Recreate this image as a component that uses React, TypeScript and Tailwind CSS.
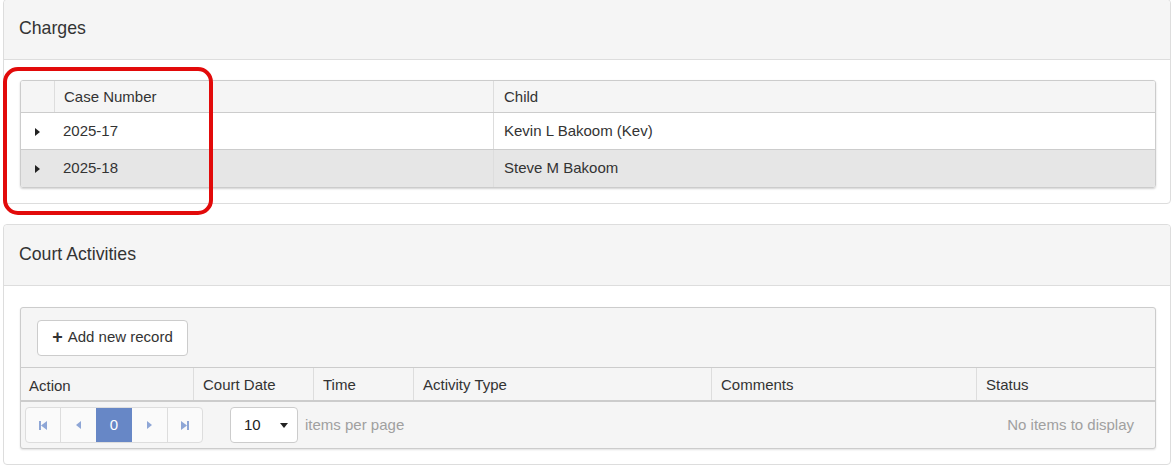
import React from "react";

function Tri({ dir }: { dir: "left" | "right" }) {
  return (
    <svg width="5" height="8" viewBox="0 0 5 8" className="block">
      {dir === "right" ? <polygon points="0,0 5,4 0,8" fill="currentColor" /> : <polygon points="5,0 0,4 5,8" fill="currentColor" />}
    </svg>
  );
}

function First() {
  return (
    <svg width="8" height="9" viewBox="0 0 8 9" className="block">
      <rect x="0" y="0" width="2" height="9" fill="currentColor" />
      <polygon points="8,0 2,4.5 8,9" fill="currentColor" />
    </svg>
  );
}
function Last() {
  return (
    <svg width="8" height="9" viewBox="0 0 8 9" className="block">
      <rect x="6" y="0" width="2" height="9" fill="currentColor" />
      <polygon points="0,0 6,4.5 0,9" fill="currentColor" />
    </svg>
  );
}

export default function App() {
  return (
    <div
      className="relative w-[1174px] h-[465px] overflow-hidden bg-white text-[#333] text-[15px]"
      style={{ fontFamily: '"Liberation Sans", Arial, sans-serif' }}
    >
      {/* Charges panel */}
      <div className="ml-[3px] mt-[-1px] w-[1168px] border border-[#ddd] rounded-[4px] bg-white">
        <div className="h-[60px] bg-[#f5f5f5] border-b border-[#ddd] rounded-t-[4px] pl-[15px] flex items-center text-[17.7px] pb-[2px]">
          Charges
        </div>
        <div className="pt-[20px] pl-[16px] pr-[14px] pb-[15px]">
          <div className="w-[1136px] border border-[#ccc] rounded-[3px] overflow-hidden shadow-[0_1px_2px_rgba(0,0,0,0.18)]">
            <div className="grid grid-cols-[33px_439px_1fr] h-[32px] bg-[#f5f5f5] border-b border-[#ccc]">
              <div />
              <div className="border-l border-[#ddd] pl-[9px] flex items-center pt-[2px]">Case Number</div>
              <div className="border-l border-[#ddd] pl-[10px] flex items-center pt-[2px]">Child</div>
            </div>
            <div className="grid grid-cols-[33px_439px_1fr] h-[37px] bg-white border-b border-[#ccc]">
              <div className="flex items-center pl-[14px] pt-px text-[#222]">
                <Tri dir="right" />
              </div>
              <div className="pl-[9px] flex items-center">2025-17</div>
              <div className="border-l border-[#ddd] pl-[10px] flex items-center">Kevin L Bakoom (Kev)</div>
            </div>
            <div className="grid grid-cols-[33px_439px_1fr] h-[37px] bg-[#e6e6e6]">
              <div className="flex items-center pl-[14px] pt-px text-[#222]">
                <Tri dir="right" />
              </div>
              <div className="pl-[9px] flex items-center">2025-18</div>
              <div className="border-l border-[#ddd] pl-[10px] flex items-center">Steve M Bakoom</div>
            </div>
          </div>
        </div>
      </div>

      {/* Court Activities panel */}
      <div className="ml-[3px] mt-[20px] w-[1168px] border border-[#ddd] rounded-[4px] bg-white">
        <div className="h-[61px] bg-[#f5f5f5] border-b border-[#ddd] rounded-t-[4px] pl-[15px] flex items-center text-[17.7px] pb-[2px]">
          Court Activities
        </div>
        <div className="pt-[21px] pl-[16px] pr-[14px] pb-[15px]">
          <div className="w-[1136px] border border-[#ccc] rounded-[3px] overflow-hidden bg-[#f5f5f5] shadow-[0_1px_2px_rgba(0,0,0,0.12)]">
            <div className="h-[60px] border-b border-[#ccc] pl-[16px] flex items-center">
              <button className="h-[36px] w-[151px] bg-white border border-[#ccc] rounded-[4px] flex items-center justify-center gap-[5px] text-[15px] text-[#333]">
                <span className="text-[18px] font-bold leading-none mt-[-2px]">+</span>
                <span>Add new record</span>
              </button>
            </div>
            <div className="grid grid-cols-[172px_120px_100px_298px_265px_1fr] h-[34px] border-b-2 border-[#ccc]">
              <div className="pl-[8px] flex items-center pt-[5px]">Action</div>
              <div className="border-l border-[#ddd] pl-[9px] flex items-center pt-[3px]">Court Date</div>
              <div className="border-l border-[#ddd] pl-[9px] flex items-center pt-[3px]">Time</div>
              <div className="border-l border-[#ddd] pl-[9px] flex items-center pt-[3px]">Activity Type</div>
              <div className="border-l border-[#ddd] pl-[9px] flex items-center pt-[3px]">Comments</div>
              <div className="border-l border-[#ddd] pl-[9px] flex items-center pt-[3px]">Status</div>
            </div>
            <div className="h-[46px] flex items-center pl-[4px] pr-[21px]">
              <div className="flex h-[36px] border border-[#ddd] rounded-[4px] overflow-hidden bg-[#fafafa] text-[#8ea6d6]">
                <div className="w-[34px] flex items-center justify-center">
                  <First />
                </div>
                <div className="w-[36px] border-l border-[#ddd] flex items-center justify-center">
                  <Tri dir="left" />
                </div>
                <div className="w-[36px] bg-[#6787c6] text-white flex items-center justify-center">0</div>
                <div className="w-[36px] border-r border-[#ddd] flex items-center justify-center">
                  <Tri dir="right" />
                </div>
                <div className="w-[34px] flex items-center justify-center">
                  <Last />
                </div>
              </div>
              <div className="ml-[27px] h-[36px] w-[68px] bg-white border border-[#ccc] rounded-[4px] flex items-center pl-[13px] pr-[9px] justify-between text-[#222]">
                <span>10</span>
                <svg width="8" height="5" viewBox="0 0 8 5" className="block mt-px">
                  <polygon points="0,0 8,0 4,5" fill="#222" />
                </svg>
              </div>
              <span className="ml-[7px] text-[#a0a0a0]">items per page</span>
              <span className="ml-auto text-[#a0a0a0]">No items to display</span>
            </div>
          </div>
        </div>
      </div>

      {/* red annotation */}
      <div className="absolute left-[3px] top-[67px] w-[210px] h-[148px] border-[4px] border-[#e20a0a] rounded-[15px] pointer-events-none" />
    </div>
  );
}
